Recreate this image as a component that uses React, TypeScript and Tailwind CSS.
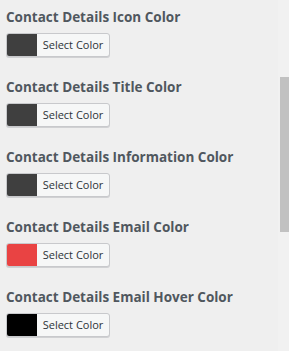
import React from "react";

const items = [
  { label: "Contact Details Icon Color", color: "#3f3f3f" },
  { label: "Contact Details Title Color", color: "#3f3f3f" },
  { label: "Contact Details Information Color", color: "#3f3f3f" },
  { label: "Contact Details Email Color", color: "#e94343" },
  { label: "Contact Details Email Hover Color", color: "#000000" },
];

export default function App() {
  return (
    <div className="flex h-[351px] w-[289px] overflow-hidden bg-[#efefef]" style={{ fontFamily: '"Open Sans", "Noto Sans", sans-serif' }}>
      <div className="flex flex-1 flex-col pl-[6px] pt-[8px]">
        {items.map((it) => (
          <div key={it.label} className="mb-[21px] flex flex-col">
            <div className="h-[18px] text-[13.5px] font-bold leading-[18px] text-[#50575e] whitespace-nowrap">{it.label}</div>
            <div className="mt-[7px] flex h-[24px] w-[104px] overflow-hidden rounded-[3px] border border-[#c8c9cc] bg-[#f6f7f7] shadow-[0_1px_0_#d0d1d3]">
              <div className="w-[30px] shrink-0" style={{ backgroundColor: it.color }} />
              <div className="flex flex-1 items-center justify-center text-[11px] text-[#2c3338]">Select Color</div>
            </div>
          </div>
        ))}
      </div>
      <div className="flex w-[11px] shrink-0 flex-col bg-[#f1f1f1] pt-[77px]">
        <div className="ml-[2px] h-[155px] w-[9px] bg-[#c1c1c1]" />
      </div>
    </div>
  );
}
